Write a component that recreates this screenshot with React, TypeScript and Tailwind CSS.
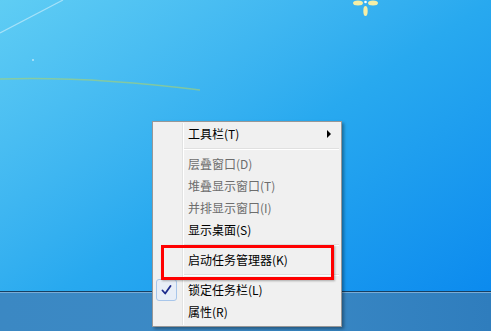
import React from "react";

type Entry =
  | { kind: "item"; label: string; disabled?: boolean; checked?: boolean; submenu?: boolean }
  | { kind: "sep" };

const entries: Entry[] = [
  { kind: "item", label: "工具栏(T)", submenu: true },
  { kind: "sep" },
  { kind: "item", label: "层叠窗口(D)", disabled: true },
  { kind: "item", label: "堆叠显示窗口(T)", disabled: true },
  { kind: "item", label: "并排显示窗口(I)", disabled: true },
  { kind: "item", label: "显示桌面(S)" },
  { kind: "sep" },
  { kind: "item", label: "启动任务管理器(K)" },
  { kind: "sep" },
  { kind: "item", label: "锁定任务栏(L)", checked: true },
  { kind: "item", label: "属性(R)" },
];

function Wallpaper() {
  return (
    <svg width="491" height="291" viewBox="0 0 491 291" className="block">
      <path d="M0 33 L63 0" stroke="rgba(255,255,255,0.45)" strokeWidth="1.2" fill="none" />
      <path d="M0 79 C60 77 120 80 200 90" stroke="rgba(170,210,110,0.6)" strokeWidth="1.5" fill="none" />
      <circle cx="33" cy="60" r="0.8" fill="#ffffff" />
      {/* small flower */}
      <ellipse cx="358" cy="3" rx="5" ry="2.5" fill="#f4eea6" />
      <ellipse cx="373" cy="3" rx="5" ry="2.5" fill="#f4eea6" />
      <ellipse cx="365.5" cy="11" rx="2.2" ry="5" fill="#f4eea6" />
      <circle cx="365.5" cy="2" r="1.3" fill="#ffffff" />
    </svg>
  );
}

export default function App() {
  return (
    <div
      className="relative w-[491px] h-[331px] overflow-hidden flex flex-col bg-linear-to-br from-[#5fcdf4] via-[#28a9ef] to-[#0786ee]"
      style={{ fontFamily: '"Noto Sans CJK SC", "Noto Sans", sans-serif' }}
    >
      <div className="h-[291px] shrink-0">
        <Wallpaper />
      </div>

      {/* taskbar */}
      <div className="flex-1 flex flex-col">
        <div className="h-px bg-[#163f63]" />
        <div className="h-px bg-[#79acd6]" />
        <div className="flex-1 bg-linear-to-r from-[#3b88c3] via-[#3b8ac6] to-[#2f7dbd]" />
      </div>

      {/* context menu */}
      <div className="absolute left-[152px] top-[121px] w-[190px] h-[206px] border border-[#979797] bg-[#f0f0f0] p-[1px] shadow-[2px_2px_3px_rgba(0,0,0,0.35)]">
        <div className="relative flex flex-col">
          <div className="absolute left-[28px] top-0 h-[202px] w-px bg-[#e2e3e3]" />
          <div className="absolute left-[29px] top-0 h-[202px] w-px bg-white" />
          {entries.map((e, i) =>
            e.kind === "sep" ? (
              <div key={i} className="h-[8px] flex flex-col justify-center pl-[30px] pr-[1px]">
                <div className="h-px bg-[#e0e0e0]" />
                <div className="h-px bg-white" />
              </div>
            ) : (
              <div key={i} className="h-[22px] flex items-center relative">
                <div className="w-[34px] shrink-0 flex items-center pl-[2px]">
                  {e.checked && (
                    <div className="w-[21px] h-[22px] rounded-[3px] border border-[#a8c6ea] bg-[#e8eef7] flex items-center justify-center">
                      <svg width="11" height="10" viewBox="0 0 11 10">
                        <path d="M1.5 5.5 L4.2 8.5 L9.5 1" stroke="#1c2a8c" strokeWidth="1.8" fill="none" strokeLinecap="round" strokeLinejoin="round" />
                      </svg>
                    </div>
                  )}
                </div>
                <span
                  className={`text-[12px] leading-none whitespace-nowrap ${
                    e.disabled ? "text-[#6d6d6d]" : "text-black"
                  }`}
                >
                  {e.label}
                </span>
                {e.submenu && (
                  <svg className="absolute left-[173px] top-[7px]" width="5" height="8" viewBox="0 0 5 8">
                    <path d="M0 0 L4 4 L0 8 Z" fill="#000" />
                  </svg>
                )}
              </div>
            )
          )}
        </div>
      </div>

      {/* red annotation box */}
      <div className="absolute left-[161px] top-[245px] w-[173px] h-[35px] border-[3px] border-[#ff0000] shadow-[1px_1px_2px_rgba(0,0,0,0.3)]" />
    </div>
  );
}
